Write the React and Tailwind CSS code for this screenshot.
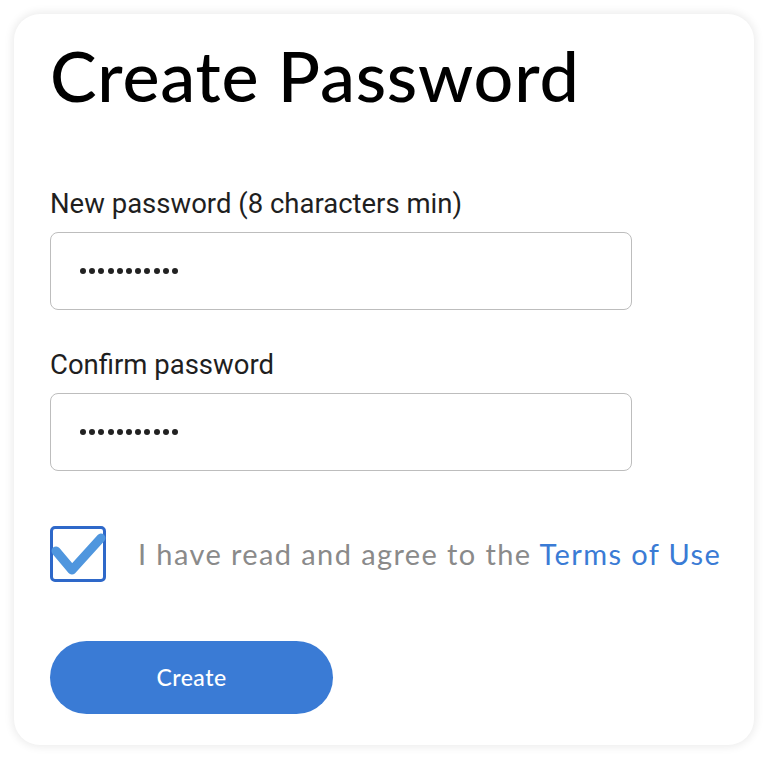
import React from "react";

const Dots = () => (
	<div className="flex gap-[3.2px]">
		{Array.from({ length: 11 }).map((_, i) => (
			<span key={`dot_${i}`} className="block w-[6px] h-[6px] rounded-full bg-[#222]" />
		))}
	</div>
);

const Field = ({ label, className }) => (
	<div className={`flex flex-col ${className}`}>
		<label className="text-[27.5px] leading-[32px] text-[#1f1f1f] font-['Roboto',sans-serif]">{label}</label>
		<div className="mt-[12px] w-[582px] h-[78px] rounded-[8px] border border-[#bdbdbd] flex items-center pl-[29px]">
			<Dots />
		</div>
	</div>
);

export default function App() {
	return (
		<div className="w-[768px] h-[758px] bg-white p-[14px]">
			<div className="w-[740px] h-[731px] bg-white rounded-[26px] shadow-[0_0_8px_2px_rgba(0,0,0,0.08)] pl-[36px] pt-[19px] flex flex-col font-['Lato',sans-serif]">
				<h1 className="text-[70px] leading-[84px] tracking-[0.8px] text-black font-medium">Create Password</h1>
				<Field className="mt-[71px]" label="New password (8 characters min)" />
				<Field className="mt-[39px]" label="Confirm password" />
				<div className="mt-[55px] flex items-center">
					<div className="relative w-[56px] h-[56px] rounded-[5px] border-[3px] border-[#2e68c9]">
						<svg className="absolute -left-[3px] -top-[3px] overflow-visible" width="56" height="56" viewBox="0 0 56 56">
							<path d="M6 25 L22 44 L51 12" fill="none" stroke="#4f96de" strokeWidth="9" strokeLinecap="round" strokeLinejoin="round" />
						</svg>
					</div>
					<p className="ml-[32px] text-[29px] tracking-[1.4px] text-[#8a8a8a]">
						I have read and agree to the <span className="text-[#3a7bd5]">Terms of Use</span>
					</p>
				</div>
				<button className="mt-[59px] w-[283px] h-[73px] rounded-full bg-[#3a7bd5] text-white text-[23px] tracking-[0.5px] font-medium">
					Create
				</button>
			</div>
		</div>
	);
}
